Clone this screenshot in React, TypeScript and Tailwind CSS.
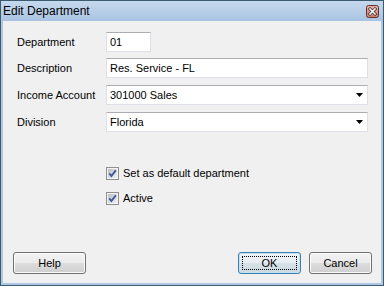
import React from 'react';

const LABEL_W = 'w-[89px]';

const Field: React.FC<{ label: string; className?: string; children: React.ReactNode }> = ({ label, className = '', children }) => (
  <div className={`flex h-[20px] items-center ${className}`}>
    <span className={`${LABEL_W} shrink-0 text-[11px] text-black`}>{label}</span>
    {children}
  </div>
);

const boxCls =
  'flex h-[20px] items-center border border-[#dde1e7] border-t-[#abadb3] bg-white pl-[3px] text-[11px] text-black';

const DropArrow = () => (
  <svg width="7" height="4" viewBox="0 0 7 4" className="mr-[4px]">
    <path d="M0 0H7L3.5 4Z" fill="#000" />
  </svg>
);

const Check: React.FC<{ label: string }> = ({ label }) => (
  <div className="flex h-[13px] items-center gap-[4px]">
    <svg width="13" height="13" viewBox="0 0 13 13">
      <defs>
        <linearGradient id="cb" x1="0" y1="0" x2="1" y2="1">
          <stop offset="0" stopColor="#b9bec4" />
          <stop offset="1" stopColor="#f2f2f3" />
        </linearGradient>
      </defs>
      <rect x="0.5" y="0.5" width="12" height="12" fill="#f4f4f4" stroke="#8e8f8f" />
      <rect x="2" y="2" width="9" height="9" fill="url(#cb)" />
      <path d="M3.3 6.4L5.4 9L9.8 3.3" fill="none" stroke="#43589a" strokeWidth="1.9" />
    </svg>
    <span className="text-[11px] text-black">{label}</span>
  </div>
);

const btnBase =
  'relative flex h-[22px] items-center justify-center rounded-[3px] border text-[11px] text-black';

export default function App() {
  return (
    <div className="h-[286px] w-[384px] bg-[#3b5b70] p-px font-['Liberation_Sans',Arial,sans-serif]">
      <div className="flex h-full flex-col bg-[#aec7e2]">
        {/* Title bar */}
        <div className="flex h-[20px] shrink-0 items-center justify-between bg-gradient-to-b from-[#c6d9ed] to-[#a9c4e2] pl-[2px] pr-[4px]">
          <span className="text-[12px] text-black">Edit Department</span>
          <svg width="13" height="13" viewBox="0 0 13 13">
            <defs>
              <linearGradient id="cl" x1="0" y1="0" x2="0" y2="1">
                <stop offset="0" stopColor="#e4b3aa" />
                <stop offset="1" stopColor="#c47b6e" />
              </linearGradient>
            </defs>
            <rect x="0.5" y="0.5" width="12" height="12" rx="2" fill="url(#cl)" stroke="#6b3028" />
            <path d="M4 4L9 9M9 4L4 9" stroke="#3a1a16" strokeWidth="3" strokeLinecap="square" />
            <path d="M4 4L9 9M9 4L4 9" stroke="#fff" strokeWidth="1.6" strokeLinecap="square" />
          </svg>
        </div>

        {/* Client area */}
        <div className="mx-[2px] mb-[2px] flex flex-1 flex-col bg-[#f0f0f0]">
          <div className="flex flex-col pl-[14px] pr-[13px] pt-[11px]">
            <Field label="Department">
              <div className={`${boxCls} w-[45px]`}>01</div>
            </Field>
            <Field label="Description" className="mt-[6px]">
              <div className={`${boxCls} flex-1`}>Res. Service - FL</div>
            </Field>
            <Field label="Income Account" className="mt-[7px]">
              <div className={`${boxCls} flex-1 justify-between`}>
                <span>301000 Sales</span>
                <DropArrow />
              </div>
            </Field>
            <Field label="Division" className="mt-[7px]">
              <div className={`${boxCls} flex-1 justify-between`}>
                <span>Florida</span>
                <DropArrow />
              </div>
            </Field>

            <div className="ml-[89px] mt-[35px] flex flex-col gap-[12px]">
              <Check label="Set as default department" />
              <Check label="Active" />
            </div>
          </div>

          <div className="mb-[9px] mt-auto flex items-center pl-[10px] pr-[9px]">
            <button
              className={`${btnBase} w-[73px] border-[#707070] bg-[linear-gradient(#f2f2f2_0%,#ebebeb_50%,#dddddd_50%,#cfcfcf_100%)] shadow-[inset_0_0_0_1px_#fbfbfb]`}
            >
              Help
            </button>
            <div className="flex-1" />
            <button
              className={`${btnBase} w-[63px] border-[#3c7fb1] bg-[linear-gradient(#f1f5f8_0%,#e6ecf0_50%,#d8e2e8_50%,#cbd8e0_100%)] shadow-[inset_0_0_0_1px_#bfe3f5]`}
            >
              OK
              <span className="absolute inset-[3px] border border-dotted border-black" />
            </button>
            <button
              className={`${btnBase} ml-[8px] w-[63px] border-[#707070] bg-[linear-gradient(#f2f2f2_0%,#ebebeb_50%,#dddddd_50%,#cfcfcf_100%)] shadow-[inset_0_0_0_1px_#fbfbfb]`}
            >
              Cancel
            </button>
          </div>
        </div>
      </div>
    </div>
  );
}
